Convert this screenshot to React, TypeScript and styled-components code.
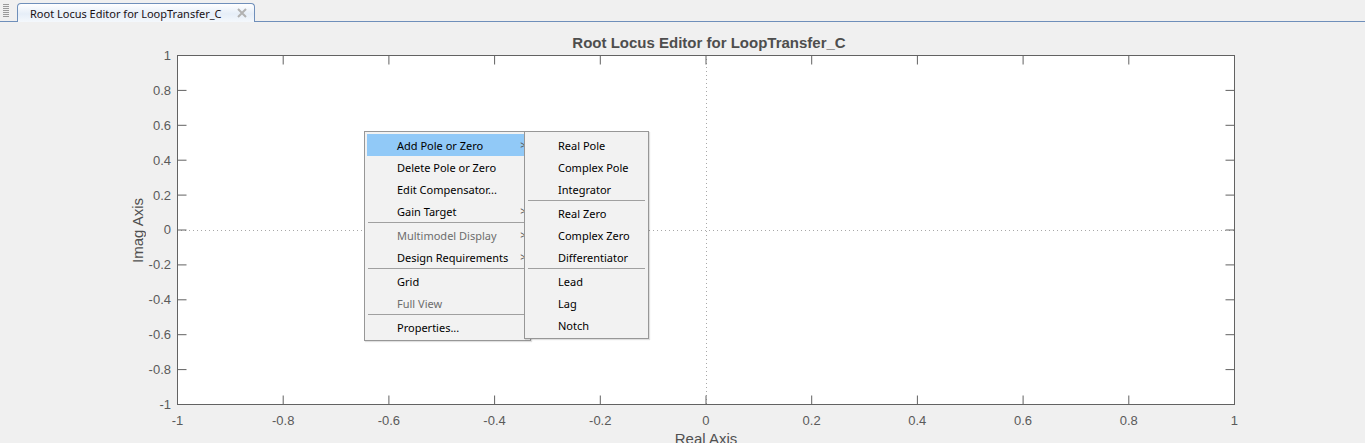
import styled, { createGlobalStyle } from "styled-components";

const GlobalStyle = createGlobalStyle`
    html, body {
        margin: 0;
        padding: 0;
        background: #f0f0f0;
    }
`;

const Page = styled.div`
    width: 1365px;
    height: 443px;
    overflow: hidden;
    background: #f0f0f0;
    display: flex;
    flex-direction: column;
`;

const TabStrip = styled.div`
    flex-shrink: 0;
    height: 21px;
    border-bottom: 1px solid #6f8fba;
    display: flex;
    align-items: flex-end;
`;

const Grip = styled.div`
    width: 6px;
    height: 13px;
    margin: 0 0 4px 3px;
    background: repeating-linear-gradient(to bottom, #9a9a9a 0 1px, transparent 1px 2px);
`;

const Tab = styled.div`
    margin-left: 8px;
    margin-bottom: -1px;
    width: 238px;
    height: 19px;
    box-sizing: border-box;
    border: 1px solid #6f8fba;
    border-bottom: none;
    border-radius: 4px 4px 0 0;
    background: linear-gradient(to bottom, #ffffff 0%, #e6eef8 55%, #f4f8fc 100%);
    display: flex;
    align-items: center;
    padding-left: 12px;
    font-family: "Noto Sans", "Liberation Sans", sans-serif;
    font-size: 11px;
    color: #1a1014;
`;

const TabTitle = styled.span`
    flex: 1;
    white-space: nowrap;
`;

const CloseIcon = styled.svg`
    width: 10px;
    height: 10px;
    margin-right: 7px;
`;

const Figure = styled.div`
    flex-shrink: 0;
    display: flex;
    flex-direction: column;
    font-family: "Liberation Sans", Arial, sans-serif;
`;

const Title = styled.div`
    margin-top: 12px;
    height: 17px;
    line-height: 17px;
    font-size: 15px;
    font-weight: bold;
    color: #4e4e4e;
    text-align: center;
    padding-left: 53px;
`;

const PlotGrid = styled.div`
    margin-top: 4px;
    display: grid;
    grid-template-columns: 177px 1058px 1fr;
    grid-template-rows: 350px auto auto;
`;

const YArea = styled.div`
    display: grid;
    grid-template-columns: 128px 18px 31px;
`;

const YLabel = styled.div`
    grid-column: 2;
    writing-mode: vertical-rl;
    transform: rotate(180deg);
    display: flex;
    align-items: center;
    justify-content: center;
    font-size: 15px;
    color: #505050;
    white-space: nowrap;
`;

const YTicks = styled.div`
    grid-column: 3;
    display: flex;
    flex-direction: column;
    justify-content: space-between;
    padding: 0.5px 0;
`;

const YTick = styled.div`
    height: 0;
    display: flex;
    align-items: center;
    justify-content: flex-end;
    padding-right: 6px;
    font-size: 13px;
    color: #5a5a5a;
    white-space: nowrap;
`;

const PlotBox = styled.div`
    position: relative;
    background: #ffffff;
`;

const AxesSvg = styled.svg`
    display: block;
`;

const XTicks = styled.div`
    grid-column: 2;
    display: flex;
    justify-content: space-between;
    padding: 8px 0.5px 0;
    height: 17px;
`;

const XTick = styled.div`
    width: 0;
    display: flex;
    justify-content: center;
    font-size: 13px;
    line-height: 15px;
    color: #5a5a5a;
    white-space: nowrap;
`;

const XLabel = styled.div`
    grid-column: 2;
    text-align: center;
    font-size: 15px;
    line-height: 18px;
    color: #505050;
`;

const Menu = styled.div<{ $left: number; $width: number }>`
    position: absolute;
    top: 76px;
    left: ${p => p.$left}px;
    width: ${p => p.$width}px;
    box-sizing: border-box;
    padding: 2px;
    background: #f2f2f2;
    border: 1px solid #979797;
    box-shadow: 1px 1px 1px rgba(0, 0, 0, 0.12);
    font-family: "Noto Sans", "Liberation Sans", sans-serif;
    font-size: 11px;
    color: #000000;
`;

const Item = styled.div<{ $active?: boolean; $disabled?: boolean; $indent: number }>`
    height: 22px;
    display: flex;
    align-items: center;
    padding-left: ${p => p.$indent}px;
    background: ${p => (p.$active ? "#91c9f7" : "transparent")};
    color: ${p => (p.$disabled ? "#6d6d6d" : "#000000")};
    white-space: nowrap;
`;

const Arrow = styled.span`
    margin-left: auto;
    padding-right: 2px;
    font-size: 10px;
    color: #555;
`;

const Separator = styled.div`
    height: 2px;
    margin: 0 1px;
    border-top: 1px solid #a0a0a0;
    box-sizing: border-box;
`;

const X_LABELS = ["-1", "-0.8", "-0.6", "-0.4", "-0.2", "0", "0.2", "0.4", "0.6", "0.8", "1"];
const Y_LABELS = ["1", "0.8", "0.6", "0.4", "0.2", "0", "-0.2", "-0.4", "-0.6", "-0.8", "-1"];

const W = 1058;
const H = 350;

type Entry = { label?: string; sub?: boolean; disabled?: boolean; active?: boolean; sep?: boolean };

const mainMenu: Entry[] = [
    { label: "Add Pole or Zero", sub: true, active: true },
    { label: "Delete Pole or Zero" },
    { label: "Edit Compensator..." },
    { label: "Gain Target", sub: true },
    { sep: true },
    { label: "Multimodel Display", sub: true, disabled: true },
    { label: "Design Requirements", sub: true },
    { sep: true },
    { label: "Grid" },
    { label: "Full View", disabled: true },
    { sep: true },
    { label: "Properties..." },
];

const subMenu: Entry[] = [
    { label: "Real Pole" },
    { label: "Complex Pole" },
    { label: "Integrator" },
    { sep: true },
    { label: "Real Zero" },
    { label: "Complex Zero" },
    { label: "Differentiator" },
    { sep: true },
    { label: "Lead" },
    { label: "Lag" },
    { label: "Notch" },
];

function Axes() {
    const xs = X_LABELS.map((_, i) => 0.5 + (i * (W - 1)) / 10);
    const ys = Y_LABELS.map((_, i) => 0.5 + (i * (H - 1)) / 10);
    return (
        <AxesSvg width={W} height={H}>
            <line x1={529.5} y1={0} x2={529.5} y2={H} stroke="#a8a8a8" strokeDasharray="1 3" />
            <line x1={0} y1={175.5} x2={W} y2={175.5} stroke="#a8a8a8" strokeDasharray="1 3" />
            <g stroke="#626262" strokeWidth={1}>
                {xs.slice(1, -1).map(x => (
                    <g key={x}>
                        <line x1={x} y1={0} x2={x} y2={9.5} />
                        <line x1={x} y1={H} x2={x} y2={H - 9.5} />
                    </g>
                ))}
                {ys.slice(1, -1).map(y => (
                    <g key={y}>
                        <line x1={0} y1={y} x2={9.5} y2={y} />
                        <line x1={W} y1={y} x2={W - 9.5} y2={y} />
                    </g>
                ))}
                <rect x={0.5} y={0.5} width={W - 1} height={H - 1} fill="none" />
            </g>
        </AxesSvg>
    );
}

function MenuList({ items, indent }: { items: Entry[]; indent: number }) {
    return (
        <>
            {items.map((it, i) =>
                it.sep ? (
                    <Separator key={i} />
                ) : (
                    <Item key={i} $indent={indent} $active={it.active} $disabled={it.disabled}>
                        {it.label}
                        {it.sub && <Arrow>&gt;</Arrow>}
                    </Item>
                )
            )}
        </>
    );
}

export default function App() {
    return (
        <Page>
            <GlobalStyle />
            <TabStrip>
                <Grip />
                <Tab>
                    <TabTitle>Root Locus Editor for LoopTransfer_C</TabTitle>
                    <CloseIcon viewBox="0 0 10 10">
                        <path d="M1 1 L9 9 M9 1 L1 9" stroke="#b2b2b2" strokeWidth={2} />
                    </CloseIcon>
                </Tab>
            </TabStrip>
            <Figure>
                <Title>Root Locus Editor for LoopTransfer_C</Title>
                <PlotGrid>
                    <YArea>
                        <YLabel>Imag Axis</YLabel>
                        <YTicks>
                            {Y_LABELS.map(l => (
                                <YTick key={l}>{l}</YTick>
                            ))}
                        </YTicks>
                    </YArea>
                    <PlotBox>
                        <Axes />
                        <Menu $left={187} $width={167}>
                            <MenuList items={mainMenu} indent={30} />
                        </Menu>
                        <Menu $left={347} $width={125}>
                            <MenuList items={subMenu} indent={31} />
                        </Menu>
                    </PlotBox>
                    <div />
                    <div />
                    <XTicks>
                        {X_LABELS.map(l => (
                            <XTick key={l}>{l}</XTick>
                        ))}
                    </XTicks>
                    <div />
                    <div />
                    <XLabel>Real Axis</XLabel>
                </PlotGrid>
            </Figure>
        </Page>
    );
}
